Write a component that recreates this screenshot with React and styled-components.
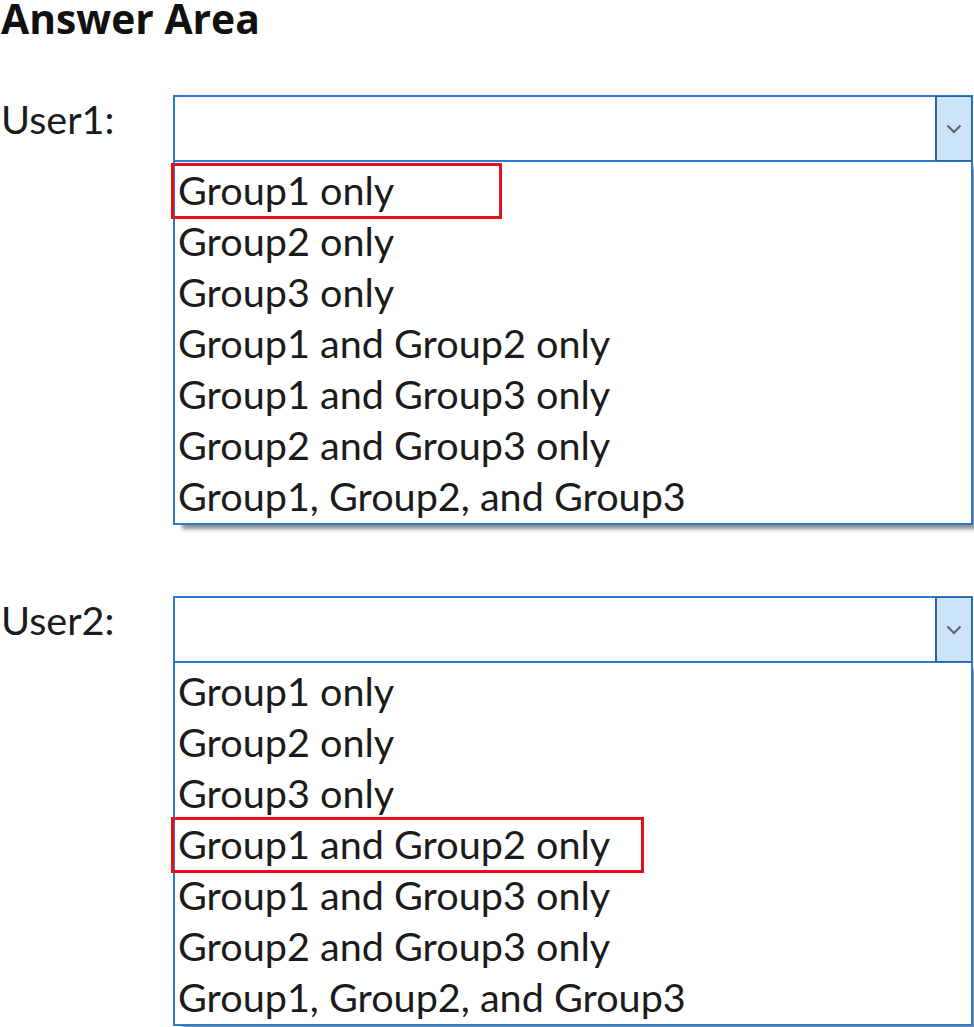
import React from 'react';
import styled, { createGlobalStyle } from 'styled-components';

const GlobalStyle = createGlobalStyle`
  html, body {
    margin: 0;
    padding: 0;
    background: #ffffff;
  }
  body {
    font-family: Lato, "Liberation Sans", sans-serif;
    color: #1b1b1b;
  }
`;

const Page = styled.main`
  display: flex;
  flex-direction: column;
  gap: 71px;
  width: 974px;
  height: 1027px;
  overflow: hidden;
`;

const Heading = styled.h1`
  margin: 0 0 -12px;
  padding-left: 1px;
  font-family: "Open Sans", "Liberation Sans", sans-serif;
  font-weight: 700;
  font-size: 40.8px;
  line-height: 36px;
  color: #111;
`;

const Question = styled.section`
  display: grid;
  grid-template-columns: 173px 800px;
`;

const Label = styled.div`
  padding-left: 1px;
  font-size: 39.6px;
  line-height: 48px;
`;

const Field = styled.div`
  display: flex;
  flex-direction: column;
`;

const SelectBox = styled.div`
  display: flex;
  justify-content: flex-end;
  box-sizing: border-box;
  height: 67px;
  border: 2px solid #2a7ad2;
  background: #fff;
`;

const DropButton = styled.div`
  display: flex;
  align-items: center;
  justify-content: center;
  flex: 0 0 34px;
  margin: -1px -1px -1px 0;
  border: 1px solid #2c63a0;
  border-left-width: 2px;
  background: #cce4f7;
`;

const ChevronIcon = styled.svg`
  display: block;
  flex: 0 0 auto;
  width: 16px;
  height: 10px;
`;

const Options = styled.ul`
  list-style: none;
  margin: 0;
  padding: 2px 0;
  border: 2px solid #2a7ad2;
  border-top: none;
  background: #fff;
  box-shadow: 8px 5px 4px -1px rgba(0, 0, 0, 0.45);
`;

const Option = styled.li`
  position: relative;
  padding-left: 3px;
  font-size: 39.6px;
  line-height: 51px;
  white-space: nowrap;
`;

const Highlight = styled.span`
  position: absolute;
  top: -1px;
  left: -4px;
  width: ${(p) => p.$width}px;
  height: 56px;
  box-sizing: border-box;
  border: 3px solid #e3101b;
  pointer-events: none;
`;

const Chevron = () => (
  <ChevronIcon viewBox="0 0 16 10" fill="none">
    <path d="M1.5 1.5 L8 8 L14.5 1.5" stroke="#5c636c" strokeWidth="2" />
  </ChevronIcon>
);

const choices = [
  'Group1 only',
  'Group2 only',
  'Group3 only',
  'Group1 and Group2 only',
  'Group1 and Group3 only',
  'Group2 and Group3 only',
  'Group1, Group2, and Group3',
];

const questions = [
  { label: 'User1:', answer: 0, boxWidth: 331 },
  { label: 'User2:', answer: 3, boxWidth: 473 },
];

export default function App() {
  return (
    <Page>
      <GlobalStyle />
      <Heading>Answer Area</Heading>
      {questions.map((q) => (
        <Question key={q.label}>
          <Label>{q.label}</Label>
          <Field>
            <SelectBox>
              <DropButton>
                <Chevron />
              </DropButton>
            </SelectBox>
            <Options>
              {choices.map((c, i) => (
                <Option key={c}>
                  {i === q.answer && <Highlight $width={q.boxWidth} />}
                  {c}
                </Option>
              ))}
            </Options>
          </Field>
        </Question>
      ))}
    </Page>
  );
}
